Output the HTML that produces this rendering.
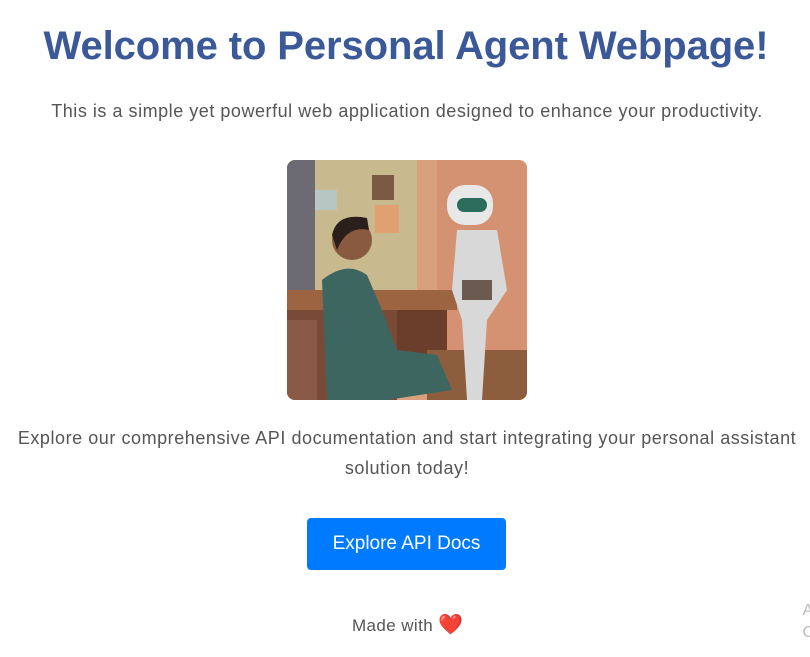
<!DOCTYPE html>
<html><head><meta charset="utf-8"><style>
body{margin:0;background:#fff;font-family:"Liberation Sans",sans-serif;width:810px;height:657px;overflow:hidden;position:relative}
h1{position:absolute;top:21px;left:0;width:812px;text-align:center;margin:0;font-size:40px;font-weight:bold;color:#3b5998;line-height:50px;letter-spacing:-0.1px}
.sub{position:absolute;top:99px;left:0;width:814px;text-align:center;font-size:18px;letter-spacing:0.53px;color:#555;margin:0;line-height:24px}
.img{position:absolute;left:287px;top:160px;width:240px;height:240px;border-radius:8px;overflow:hidden}
.p2{position:absolute;top:423px;left:0;width:814px;text-align:center;font-size:18px;letter-spacing:0.55px;color:#555;margin:0;line-height:30px}
.btn{position:absolute;left:307px;top:518px;width:199px;height:52px;background:#007bff;color:#fff;border-radius:4px;font-size:19px;line-height:52px;text-align:center}
.ft{position:absolute;top:614px;left:352px;font-size:17px;letter-spacing:0.4px;color:#555;line-height:22px}
.ft span{font-size:20px;color:#e8141e}
.side{position:absolute;right:-4px;top:600px;color:#bbb;font-size:16px;line-height:22px}
</style></head><body>
<h1>Welcome to Personal Agent Webpage!</h1>
<p class="sub">This is a simple yet powerful web application designed to enhance your productivity.</p>
<div class="img"><svg width="240" height="240" viewBox="0 0 240 240">
<rect width="240" height="240" fill="#d9a07e"/>
<rect x="0" y="0" width="130" height="145" fill="#c8b98e"/>
<rect x="0" y="0" width="28" height="150" fill="#6c6a72"/>
<rect x="28" y="30" width="22" height="20" fill="#b7c6c2"/>
<rect x="85" y="15" width="22" height="25" fill="#7a5a44"/>
<rect x="88" y="45" width="24" height="28" fill="#e0a070"/>
<rect x="150" y="0" width="90" height="240" fill="#d49272"/>
<rect x="0" y="130" width="170" height="20" fill="#9c6440"/>
<rect x="100" y="150" width="60" height="50" fill="#6a3e2a"/>
<rect x="140" y="190" width="100" height="50" fill="#8d5e3e"/>
<rect x="0" y="150" width="110" height="90" fill="#7a4a38"/>
<rect x="0" y="160" width="30" height="80" fill="#8a5a46"/>
<path d="M35 120 Q60 100 80 115 L95 150 L110 190 L150 195 L165 230 L100 240 L40 240 Z" fill="#3e6660"/>
<circle cx="65" cy="80" r="20" fill="#8a5a40"/>
<path d="M45 75 Q50 52 80 58 L82 70 Q60 65 50 90Z" fill="#2a1f1a"/>
<rect x="160" y="25" width="46" height="40" rx="18" fill="#e8e8e8"/>
<rect x="170" y="38" width="30" height="14" rx="7" fill="#2b6d5a"/>
<path d="M170 70 L210 70 L220 130 L200 160 L195 240 L180 240 L175 160 L165 130 Z" fill="#d8d8d8"/>
<rect x="175" y="120" width="30" height="20" fill="#6a5a50"/>
</svg></div>
<p class="p2">Explore our comprehensive API documentation and start integrating your personal assistant<br>solution today!</p>
<div class="btn">Explore API Docs</div>
<div class="ft">Made with <span>&#10084;&#65039;</span></div>
<div class="side">A<br>C</div>
</body></html>
